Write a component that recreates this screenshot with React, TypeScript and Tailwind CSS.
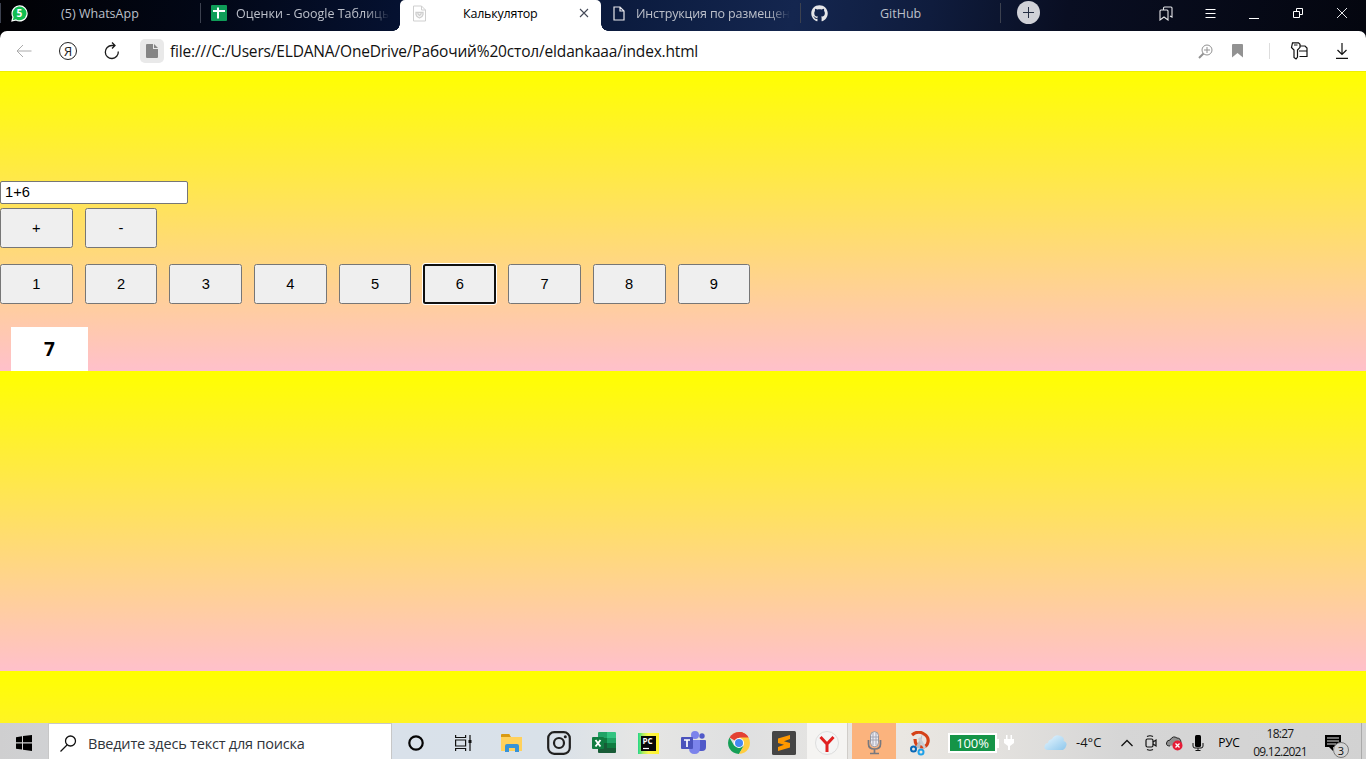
import React from "react";
import { FaGithub } from "react-icons/fa";

const digits = ["1", "2", "3", "4", "5", "6", "7", "8", "9"];

function Tab({ icon, iconClass, children, className = "" }: { icon: React.ReactNode; iconClass: string; children: React.ReactNode; className?: string }) {
  return (
    <div className={`relative flex h-[31px] w-[200px] shrink-0 items-start overflow-hidden text-[12.5px] leading-[27px] whitespace-nowrap text-[#bcc0ca] ${className}`}>
      <div className={`flex h-[26px] shrink-0 items-center ${iconClass}`}>{icon}</div>
      {children}
    </div>
  );
}

function Divider() {
  return <div className="mt-[3px] h-5 w-px shrink-0 bg-[#3c414f]" />;
}

function TabStrip() {
  return (
    <header className="flex h-[31px] w-full shrink-0 bg-[linear-gradient(100deg,#010104_0%,#020716_15%,#051130_29%,#0b1b3e_45%,#14264f_58%,#0f1c3d_68%,#090e22_78%,#04060f_100%)]">
      <Divider />
      <Tab iconClass="ml-[10px] w-[50px]" className="!w-[199px]" icon={
        <svg width="17" height="17" viewBox="0 0 17 17">
          <path d="M1 16l1-4A7.5 7.5 0 1 1 5 15z" fill="#12bd50" stroke="#fff" strokeWidth="1.2" />
          <text x="8.4" y="12.2" textAnchor="middle" fontSize="10" fontWeight="700" fill="#fff" fontFamily="Open Sans">5</text>
        </svg>}>
        <span className="tracking-[0.03px]">(5) WhatsApp</span>
      </Tab>
      <Divider />
      <Tab iconClass="ml-[10px] w-[25px]" className="!w-[199px]" icon={
        <svg width="16" height="16" viewBox="0 0 16 16"><rect width="16" height="16" rx="1" fill="#0f9d58" /><path d="M2 6h12M7 2.5v11" stroke="#fff" strokeWidth="2" /></svg>}>
        <span className="w-[154px] overflow-hidden [mask-image:linear-gradient(90deg,#000_84%,transparent)]">Оценки - Google Таблицы</span>
        <i className="absolute right-0 bottom-0 size-[7px] bg-[radial-gradient(circle_at_0_0,transparent_6.5px,#fff_7px)]" />
      </Tab>
      <Tab iconClass="ml-[13px] w-[50px]" className="!w-[201px] rounded-t-[5px] bg-white !text-black" icon={
        <svg width="13" height="17" viewBox="0 0 13 17" fill="none" stroke="#cfcfcf"><path d="M.5 1h8l4 4v11H.5zM8.5 1v4h4" /><path d="M3 7.500h7v2Q9.500 12 6.500 13 3.500 12 3 9.500zM4.500 8.500l2 2 2-2" strokeWidth="1.3" /></svg>}>
        <span className="w-[116px] tracking-[-0.22px]">Калькулятор</span>
        <svg className="mt-2 shrink-0" width="10" height="10" viewBox="0 0 10 10" stroke="#454a58" strokeWidth="1.1"><path d="M1 1l8 8M9 1L1 9" /></svg>
      </Tab>
      <Tab iconClass="ml-[12px] w-[23px]" className="!w-[199px]" icon={
        <svg width="12" height="15" viewBox="0 0 12 15" fill="none" stroke="#e8e8ec" strokeWidth="1.2"><path d="M1 1h6l4 4v9H1zM7 1v4h4" /></svg>}>
        <i className="absolute bottom-0 left-0 size-[7px] bg-[radial-gradient(circle_at_100%_0,transparent_6.5px,#fff_7px)]" />
        <span className="w-[154px] overflow-hidden tracking-[-0.15px] [mask-image:linear-gradient(90deg,#000_86%,transparent)]">Инструкция по размещению</span>
      </Tab>
      <Divider />
      <Tab iconClass="ml-[10px] w-[69px]" className="!w-[199px]" icon={<FaGithub size={17} color="#e6e6e8" />}>
        <span>GitHub</span>
      </Tab>
      <Divider />
      <div className="ml-4 mt-px flex size-[23px] items-center justify-center rounded-full bg-[#d0d1d7]">
        <svg width="11" height="11" stroke="#252d42" strokeWidth="1"><path d="M0 5.5h11M5.5 0v11" /></svg>
      </div>
      <div className="ml-auto mr-[2px] grid h-[26px] grid-cols-[44px_44px_44px_44px_44px] place-items-center">
        <svg width="14" height="15" fill="none" stroke="#e5e6e9" strokeWidth="1.1"><path d="M1 14V5q0-1 1-1h6q1 0 1 1v9l-4-3zM4.500 3.500V2q0-1 1-1h6.500q1 0 1 1v9l-2-1" /></svg>
        <svg width="11" height="11" stroke="#fff"><path d="M.5 1.500h10M.5 5.500h10M.5 9.500h10" /></svg>
        <svg className="mt-[2px]" width="10" height="10" stroke="#fff"><path d="M0 9.500h10" /></svg>
        <svg width="10" height="10" fill="none" stroke="#fff"><path d="M.5 3.500h6v6h-6zM3.500 3V.5h6v6H7" /></svg>
        <svg width="10" height="10" stroke="#e5e6e9"><path d="M0 0l10 10M10 0L0 10" /></svg>
      </div>
    </header>
  );
}

function AddressBar() {
  return (
    <div className="shrink-0 bg-[linear-gradient(90deg,#010104_0%,#010104_20px,#06122f_30%,#13244b_58%,#04060f_100%)]">
      <div className="flex h-[40px] items-center rounded-t-[7px] bg-white pl-[2px]">
        <div className="grid w-[132px] grid-cols-3 place-items-center">
          <svg width="16" height="14" fill="none" stroke="#aaa"><path d="M15.500 7H1M7 1L1 7l6 6" /></svg>
          <div className="flex size-[18px] items-center justify-center rounded-full border border-[#222] text-[13px] leading-none text-[#222]">Я</div>
          <svg width="16" height="18" viewBox="0 0 16 18" fill="none" stroke="#1a1a1a" strokeWidth="1.3"><path d="M14.300 9.500A6.500 6.500 0 1 1 7.800 3.500H11M8 .5l3 3L8 6.500" /></svg>
        </div>
        <div className="ml-[6px] flex size-6 items-center justify-center rounded-[5px] bg-[#e9e9e9]">
          <svg width="12" height="14" fill="#858585"><path d="M1 0h6v5h5v8q0 1-1 1H1q-1 0-1-1V1q0-1 1-1zM8 0l4 4H8z" /></svg>
        </div>
        <span className="ml-[6px] whitespace-nowrap pt-[2px] text-[15.5px] tracking-[-0.17px] text-[#111]">file:///C:/Users/ELDANA/OneDrive/Рабочий%20стол/eldankaaa/index.html</span>
        <div className="ml-auto flex items-center pr-[18px]">
          <svg width="15" height="15" fill="none" stroke="#929292"><circle cx="9" cy="6" r="5" /><path d="M6 6h6M9 3v6" /><path d="M5.500 9.500L1 14" strokeWidth="2" /></svg>
          <svg className="ml-[19px]" width="11" height="14" fill="#929292"><path d="M0 1q0-1 1-1h9q1 0 1 1v12.500L5.500 9 0 13.500z" /></svg>
          <div className="ml-[26px] h-4 w-px bg-[#ddd]" />
          <svg className="ml-5" width="18" height="18" fill="none" stroke="#111" strokeWidth="1.200"><path d="M2.500.8h6l1.500 1.500v3L7.500 8v7L6 17l-2-1.500V8L1.500 5.500zM4 3h3.500M10.500 4h4.500l2 2v8.500H9.500M9 9h8" /></svg>
          <svg className="ml-[28px]" width="12" height="16" fill="none" stroke="#111" strokeWidth="1.200"><path d="M6 0v11M1.500 7L6 11.500 10.500 7M0 15.400h12" /></svg>
        </div>
      </div>
    </div>
  );
}

function Key({ label, active = false }: { label: string; active?: boolean }) {
  return (
    <button className={`h-10 w-[72.7px] rounded-[2.500px] bg-[#efefef] font-['Liberation_Sans',sans-serif] text-[14.667px] text-black ${active ? "border-2 border-[#101010] shadow-[0_0_0_1px_#fff]" : "border border-[#767676]"}`}>
      {label}
    </button>
  );
}

function Calculator() {
  return (
    <main className="flex h-[652px] shrink-0 flex-col items-start border-t border-[#e5e500]/60 bg-[linear-gradient(#ff0,#ffc0cb)] bg-[length:100%_300px] bg-origin-border pt-[109px]">
      <input readOnly value="1+6" className="h-[23px] w-[188px] rounded-[2px] border border-[#767676] bg-white px-1 pb-[2px] font-['Liberation_Sans',sans-serif] text-[14.667px] text-black outline-none" />
      <div className="mt-1 flex gap-3"><Key label="+" /><Key label="-" /></div>
      <div className="mt-4 flex gap-3">{digits.map((d) => <Key key={d} label={d} active={d === "6"} />)}</div>
      <div className="ml-[11px] mt-[23px] flex h-11 w-[77px] items-center justify-center bg-white text-[19px] font-bold text-black">7</div>
    </main>
  );
}

function ExplorerIcon() {
  return <svg width="22" height="18"><path d="M0 2q0-2 2-2h7v3h12v14H0z" fill="#ffd15c" /><path d="M0 1q0-1 1-1h7l2 3H0z" fill="#d99a13" /><path d="M4 18v-6q0-2 2-2h10q2 0 2 2v6h-4v-4H8v4z" fill="#3693d8" /></svg>;
}

function InstagramIcon() {
  return <svg width="24" height="24" fill="none" stroke="#202020" strokeWidth="2.200"><rect x="1.200" y="1.200" width="21.600" height="21.600" rx="6" /><circle cx="12" cy="12" r="5" /><circle cx="18.300" cy="5.700" r="1.500" fill="#202020" stroke="none" /></svg>;
}

function ExcelIcon() {
  return <svg width="24" height="22"><path d="M6 1q0-1 1-1h8v11H6z" fill="#21a366" /><path d="M15 0h8q1 0 1 1v5h-9z" fill="#33c481" /><path d="M6 6h9v5H6z" fill="#107c41" /><path d="M15 6h9v5h-9z" fill="#21a366" /><path d="M6 11h9v5H6z" fill="#185c37" /><path d="M15 11h9v5h-9z" fill="#107c41" /><path d="M6 16h18v4q0 1-1 1H7q-1 0-1-1z" fill="#185c37" /><rect y="5" width="12" height="12" rx="1" fill="#107c41" /><path d="M3.500 8l5 6.500M8.500 8l-5 6.500" stroke="#fff" strokeWidth="1.900" /></svg>;
}

function PyCharmIcon() {
  return <svg width="22" height="21"><defs><linearGradient id="pc"><stop stopColor="#21d789" /><stop offset=".25" stopColor="#b5ee5c" /><stop offset=".5" stopColor="#fcf84a" /><stop offset="1" stopColor="#fff12d" /></linearGradient></defs><path d="M0 0h21v21H0z" fill="url(#pc)" /><rect x="3" y="3" width="15" height="15" fill="#080808" /><text x="4.500" y="10.500" fontSize="8" fontWeight="700" fill="#fff" fontFamily="Open Sans">PC</text><path d="M5 15.500h6" stroke="#fff" strokeWidth="1.200" /></svg>;
}

function TeamsIcon() {
  return <svg width="25" height="24"><circle cx="14" cy="4" r="4" fill="#7b83eb" /><circle cx="21" cy="5" r="2.700" fill="#5059c9" /><path d="M17 9h7q1 0 1 1v6q0 4-4 4h-4z" fill="#5059c9" /><path d="M8 9h11v8q0 6-5.500 6T8 17z" fill="#7b83eb" /><rect y="6" width="12" height="12" rx="1" fill="#4b53bc" /><path d="M3 9h6M6 9v7" stroke="#fff" strokeWidth="1.700" /></svg>;
}

function ChromeIcon() {
  return <svg width="22" height="22" viewBox="0 0 22 22"><path d="M11 11L1.500 5.500A11 11 0 0 1 20.500 5.500z" fill="#e34133" /><path d="M11 11V0A11 11 0 0 1 20.500 5.500H11z" fill="#e34133" /><path d="M1.500 5.500A11 11 0 0 0 11 22l4.800-8.200H6.200z" fill="#159f57" /><path d="M20.500 5.500A11 11 0 0 1 11 22l4.800-8.200L11 5.500z" fill="#ffcd40" /><circle cx="11" cy="11" r="5" fill="#fff" /><circle cx="11" cy="11" r="4" fill="#4587f3" /></svg>;
}

function SublimeIcon() {
  return <svg width="24" height="24"><rect width="24" height="24" rx="1.500" fill="#454545" /><path d="M6 7.500l12-3.500v4l-6 2.200 6 1.800v4.500L6 20v-4l6-2.200L6 12z" fill="#ff9800" /></svg>;
}

function YandexIcon() {
  return <svg width="24" height="24"><circle cx="12" cy="12" r="11.500" fill="#f5f5f5" stroke="#ddd" /><path d="M5.500 6L12 13l6.500-7M12 12v9" fill="none" stroke="#e02020" strokeWidth="3" /></svg>;
}

function StudioMicIcon() {
  return <svg width="15" height="24"><path d="M1.500 9v4q0 5 6 5t6-5V9M7.500 18v4M3 22.500h9" fill="none" stroke="#77787e" strokeWidth="1.700" /><rect x="3.500" y=".7" width="8" height="15" rx="4" fill="#ececf3" stroke="#95959d" /><path d="M4 6h7M4 9h7M6 2v12M9 2v12" stroke="#a5a6b4" /></svg>;
}

function SnipIcon() {
  return <svg width="20" height="25" fill="none"><path d="M2 4Q8-1 14 3q5 3 4 8t-6 5Q5 16 5 8" stroke="#d54218" strokeWidth="3.200" /><path d="M12.500 3L10 17l-5 .500z" fill="#b9bdc1" /><path d="M9 7l6 10" stroke="#c9cdd1" strokeWidth="2.500" /><circle cx="3.500" cy="18" r="2.500" stroke="#0867b6" strokeWidth="2" /><circle cx="11" cy="21" r="2.500" stroke="#20a2e9" strokeWidth="2" /></svg>;
}

function Cell({ w, children }: { w: string; children: React.ReactNode }) {
  return <div className={`flex h-10 shrink-0 items-center justify-center ${w}`}>{children}</div>;
}

function Taskbar() {
  return (
    <footer className="flex h-10 w-full shrink-0 bg-[linear-gradient(90deg,#cfcfd0_0%,#d9e1ea_29%,#d9e1e9_40%,#e6e6e4_47%,#dfe0e1_54%,#eae7e2_66%,#e3e1de_73%,#d6d6d6_82%,#d2d2d2_100%)]">
      <Cell w="w-[48px]"><svg width="16" height="16"><path d="M0 2.200L6 1.300v6H0zM7 1.100L16 0v7.300H7zM0 8.400h6v6.200l-6-.8zM7 8.400h9V16l-9-1.300z" /></svg></Cell>
      <div className="flex h-10 w-[344px] shrink-0 items-center border border-[#c7c7c7] bg-white pl-[11px] text-[14.500px] text-[#30343a]">
        <svg width="17" height="17" fill="none" stroke="#111" strokeWidth="1.300"><circle cx="10.500" cy="6" r="5" /><path d="M7 10l-6.500 6.500" /></svg>
        <span className="ml-[11px] whitespace-nowrap pt-px tracking-[-0.2px]">Введите здесь текст для поиска</span>
      </div>
      <Cell w="w-[48px]"><svg width="16" height="16" fill="none" stroke="#050505" strokeWidth="2.200"><circle cx="8" cy="8" r="6.700" /></svg></Cell>
      <Cell w="w-[47px]"><svg width="17" height="16" fill="none" stroke="#111" strokeWidth="1.200"><path d="M.6 0v2.500h10V0M.6 5h10v6h-10zM.6 16v-2.500h10V16M15 0v16" /><rect x="13.500" y="5" width="3" height="3" fill="#111" stroke="none" /></svg></Cell>
      <Cell w="w-[49px]"><ExplorerIcon /></Cell>
      <Cell w="w-[45px]"><InstagramIcon /></Cell>
      <Cell w="w-[45px]"><ExcelIcon /></Cell>
      <Cell w="w-[45px]"><PyCharmIcon /></Cell>
      <Cell w="w-[45px]"><TeamsIcon /></Cell>
      <Cell w="w-[45px]"><ChromeIcon /></Cell>
      <Cell w="w-[46px]"><SublimeIcon /></Cell>
      <Cell w="w-[40px] bg-[#f5f4f2]"><YandexIcon /></Cell>
      <div className="mr-1 h-10 w-px shrink-0 bg-[#d0cdc9]" />
      <Cell w="w-[44px] bg-[#fbb37d]"><StudioMicIcon /></Cell>
      <Cell w="w-[47px]"><SnipIcon /></Cell>
      <div className="ml-[5px] flex h-10 shrink-0 items-center">
        <div className="flex h-5 w-[49px] items-center justify-center border-2 border-white bg-[#159447] text-[13px] leading-none tracking-[-0.1px] text-white">100%</div>
        <div className="h-[9px] w-[2px] bg-white" />
        <svg className="ml-[5px]" width="10" height="16" fill="#fff"><path d="M2 0h1.500v4h3V0H8v4h2v4L6 11v4H4v-4L0 8V4h2z" /></svg>
      </div>
      <svg className="ml-[30px] mt-3 shrink-0" width="23" height="16"><defs><linearGradient id="cloud" x1="0" y1="0" x2="1" y2="1"><stop stopColor="#e9f7ff" /><stop offset="1" stopColor="#8ec7ec" /></linearGradient></defs><path d="M4 15Q0 15 .5 11.500T4 8q0-3 4-4 3-5 8-3.200T19.500 6q3.500 1 3 4T19 15z" fill="url(#cloud)" /></svg>
      <div className="ml-[9px] flex w-[31px] shrink-0 items-center text-[13px] whitespace-nowrap text-[#151515]">-4°C</div>
      <Cell w="w-[39px]"><svg width="12" height="8" fill="none" stroke="#111" strokeWidth="1.300"><path d="M.5 7L6 1.500 11.500 7" /></svg></Cell>
      <Cell w="w-[10px]"><svg className="shrink-0" width="12" height="16" fill="none" stroke="#111" strokeWidth="1.200"><rect x="1" y="4" width="7" height="8" rx="1.500" /><path d="M8 7l3-2v6L8 9M2 1.500Q5 0 8 1.500M2 14.500q3 1.500 6 0" /></svg></Cell>
      <Cell w="w-[37px]"><svg width="17" height="15"><path d="M4 10Q0 10 .5 7T4 4q3-5 7-2 4 0 4 5" fill="#909090" stroke="#252525" /><circle cx="11.500" cy="9.500" r="5" fill="#e61c37" /><path d="M9.500 7.500l4 4m0-4l-4 4" stroke="#fff" strokeWidth="1.300" /></svg></Cell>
      <Cell w="w-[10px]"><svg className="shrink-0" width="12" height="16"><rect x="3" width="6" height="12" rx="1.500" /><path d="M1 8v3q0 2 2 2h6q2 0 2-2V8M6 13v3M3.500 15.500h5" fill="none" stroke="#111" /></svg></Cell>
      <Cell w="w-[50px] pl-[2px] text-[12px] tracking-[-0.3px]">РУС</Cell>
      <div className="flex h-10 w-[54px] shrink-0 flex-col items-center pt-[2px] text-[12px] leading-[18px] tracking-[-0.750px] whitespace-nowrap text-[#171717]"><span>18:27</span><span>09.12.2021</span></div>
      <div className="relative ml-[18px] mt-3 h-7 w-6 shrink-0">
        <svg width="16" height="16"><path d="M0 0h16v12H8v4l-4-4H0z" /><path d="M2 3h12M2 6h12M2 9h9" stroke="#ddd" strokeWidth="1.200" /></svg>
        <span className="absolute left-2 top-[7px] flex size-4 items-center justify-center rounded-full border border-[#777] bg-[#d4d4d4] text-[11px] leading-none text-[#111]">3</span>
      </div>
      <div className="ml-[12px] h-10 w-px bg-[#aaa]" />
    </footer>
  );
}

export default function App() {
  return (
    <div className="flex h-[759px] w-[1366px] flex-col overflow-hidden font-['Open_Sans',sans-serif]">
      <TabStrip />
      <AddressBar />
      <Calculator />
      <Taskbar />
    </div>
  );
}
